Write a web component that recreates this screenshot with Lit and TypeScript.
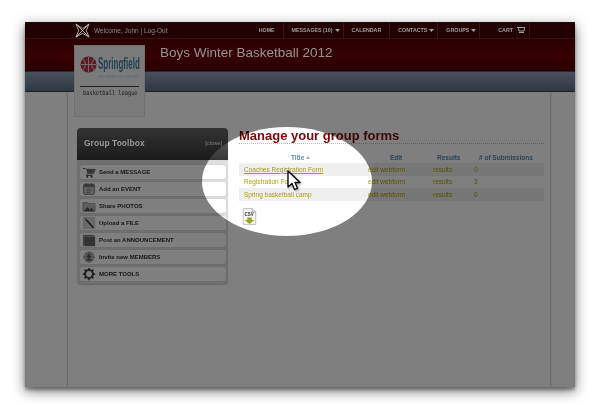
import { LitElement, html, css, svg } from "lit";
import { customElement } from "lit/decorators.js";

const caret = html`<svg class="caret" width="5" height="3" viewBox="0 0 5 3"><path d="M0 0h5L2.5 3z" fill="#a0a0a0"/></svg>`;

const icons: Record<string, unknown> = {
  cart: svg`<path d="M1 4h3l1 1h10l-2 5H6l-1 2h7" fill="none" stroke="#555" stroke-width="1.100"/><path d="M5 5h9l-1.500 4H6z" fill="#6a6a6a"/><circle cx="6" cy="13.500" r="1.100" fill="#444"/><circle cx="11" cy="13.500" r="1.100" fill="#444"/>`,
  event: svg`<rect x="2" y="2.500" width="12" height="11.500" rx="1" fill="#d4d4d4" stroke="#555"/><rect x="2.500" y="3" width="11" height="3" fill="#777"/><path d="M5 8h6M5 10h6M5 12h4" stroke="#666" stroke-width=".9"/><path d="M5 1.500v3M11 1.500v3" stroke="#555"/>`,
  photos: svg`<path d="M1 4h5l1 1h8v9H1z" fill="#bbb" stroke="#777" stroke-width=".7"/><path d="M2 14l4-5 3 3 2-2 3 4z" fill="#555"/>`,
  file: svg`<rect x="1" y="1" width="14" height="14" fill="#d0d0d0"/><path d="M4 3.500l9 10" stroke="#333" stroke-width="1.700"/><path d="M3 2.500l1.500 1.500" stroke="#999" stroke-width="2"/>`,
  post: svg`<rect x="1" y="2" width="13" height="13" fill="#888"/><rect x="3" y="4" width="12" height="11" fill="#666"/><path d="M1 4h13" stroke="#aaa" stroke-width=".8"/>`,
  invite: svg`<circle cx="8" cy="8" r="6.500" fill="#bbb"/><path d="M1.500 8h13M8 1.500v13M4 3.500c3 2 5 2 8 0M4 12.500c3-2 5-2 8 0" stroke="#777" stroke-width=".8" fill="none"/><circle cx="8" cy="7" r="2" fill="#555"/><path d="M5 12c0-3 6-3 6 0z" fill="#555"/>`,
  more: svg`<circle cx="8" cy="8" r="4.500" fill="none" stroke="#444" stroke-width="2.400"/><path d="M8 1v3M8 12v3M1 8h3M12 8h3M3 3l2 2M11 11l2 2M13 3l-2 2M5 11l-2 2" stroke="#444" stroke-width="2"/>`,
};

const tools = [
  ["cart", "Send a MESSAGE"],
  ["event", "Add an EVENT"],
  ["photos", "Share PHOTOS"],
  ["file", "Upload a FILE"],
  ["post", "Post an ANNOUNCEMENT"],
  ["invite", "Invite new MEMBERS"],
  ["more", "MORE TOOLS"],
];

const forms: [string, string][] = [
  ["Coaches Registration Form", "0"],
  ["Registration Form", "3"],
  ["Spring basketball camp", "0"],
];

@customElement("app-root")
export class AppRoot extends LitElement {
  static styles = css`
    :host { display: block; width: 600px; height: 420px; background: #fff; overflow: hidden; font-family: "Liberation Sans", Arial, sans-serif; }
    .stage { padding: 22px 25px 0; }
    .frame { position: relative; width: 550px; height: 365px; background: #fff; box-shadow: 0 3px 3px rgba(0,0,0,.3), 0 4px 12px rgba(0,0,0,.55); }
    .clip { position: absolute; inset: 0; overflow: hidden; filter: blur(.3px); }
    .head { position: relative; z-index: 3; }
    .top { height: 16px; background: #220000; border-bottom: 1px solid #3c1010; display: flex; align-items: center; padding-left: 50px; }
    .mark { width: 15px; height: 15px; margin-right: 4px; }
    .welcome { font-size: 6.5px; color: #8c8c8c; flex: 1; }
    .nav { display: flex; height: 16px; align-items: stretch; padding-right: 45px; }
    .nav span { display: flex; align-items: center; gap: 2px; font-size: 5.3px; font-weight: bold; color: #a0a0a0; padding: 0 8px; border-right: 1px solid #3f1414; white-space: nowrap; box-sizing: border-box; }
    .nav .has { padding: 0 3px 0 8px; }
    .nav .cart { padding: 0 4px 0 18px; gap: 4px; }
    .band { height: 33px; background: linear-gradient(#2c0000, #360000 55%, #2a0000); border-bottom: 1px solid #242a30; display: flex; padding: 5px 0 0 135px; box-sizing: border-box; }
    .band h1 { margin: 0; font-weight: normal; font-size: 13.5px; line-height: 17px; color: #949494; }
    .slate { height: 20px; background: linear-gradient(#46515c, #2f3842); border-bottom: 1px solid #222; box-sizing: border-box; }
    .logo { position: absolute; left: 49px; top: 23px; width: 71px; height: 72px; box-sizing: border-box; background: #7a7a7a; border: 1px solid #707070; z-index: 4; overflow: hidden; }
    .ball { position: absolute; left: 5px; top: 10px; width: 17px; height: 17px; }
    .spring { position: absolute; left: 23px; top: 9px; font-size: 16px; line-height: 18px; font-weight: bold; color: #23404f; transform: scaleX(.5); transform-origin: left top; white-space: nowrap; }
    .rec { position: absolute; left: 23px; top: 28px; font-size: 4px; line-height: 5px; color: #4e6a78; transform: scaleX(.92); transform-origin: left top; white-space: nowrap; }
    .rule { position: absolute; left: 5px; right: 5px; top: 40px; height: 1px; background: #222; }
    .league { position: absolute; left: 8px; top: 43px; font-size: 6.5px; line-height: 9px; color: #1c1c1c; font-family: "DejaVu Sans Mono", monospace; transform: scaleX(.82); transform-origin: left top; white-space: nowrap; }

    .main { position: absolute; left: 0; right: 0; top: 70px; bottom: 0; background: #fff; }
    .column { position: absolute; left: 43px; right: 25px; top: 0; bottom: 0; box-shadow: 0 0 2px rgba(0,0,0,.5); background: #fff; display: grid; grid-template-columns: 151px 305px; gap: 11px; padding: 36px 0 0 9px; align-items: start; }
    .toolbox { background: #dedede; border-radius: 4px; padding-bottom: 3px; box-shadow: 0 1px 1px rgba(0,0,0,.2); }
    .tb-head { height: 32px; border-radius: 4px 4px 0 0; background: linear-gradient(#666, #363636); display: flex; align-items: center; justify-content: space-between; padding: 0 6px 2px 7px; box-sizing: border-box; margin-bottom: 5px; }
    .tb-head b { position: relative; z-index: 3; font-size: 8.4px; color: #999; letter-spacing: .1px; }
    .tb-head small { font-size: 5.8px; color: #f0f0f0; }
    .tb-row { height: 14px; margin: 0 2px 3px 3px; background: #fff; border-radius: 2px; display: flex; align-items: center; font-size: 6px; font-weight: bold; color: #333; box-shadow: 0 0 1px rgba(0,0,0,.25); }
    .tb-row:last-child { margin-bottom: 0; }
    .tb-row svg { width: 14px; height: 14px; margin: 0 3px 0 2px; flex: none; }
    .forms h2 { margin: 0; font-size: 13px; line-height: 15px; color: #7a0808; }
    .forms .dots { border-bottom: 1px dotted #bbb; margin: 0 0 7px; }
    .row { display: grid; grid-template-columns: 129px 65px 41px 70px; align-items: center; font-size: 6.5px; color: #aea000; }
    .row.th { height: 12px; color: #5a8aa6; font-weight: bold; }
    .row.th .t { padding-left: 52px; }
    .row.th .e { padding-left: 22px; }
    .row.th .r { padding-left: 4px; }
    .row.th .n { padding-left: 5px; white-space: nowrap; }
    .row.tr { height: 12.6px; }
    .row.shade { background: #efefef; }
    .row.tr > :first-child { padding-left: 5px; white-space: nowrap; }
    .row u { color: #a89c00; }
    .sort { display: inline-block; width: 0; height: 0; border: 2.5px solid transparent; border-bottom: 3px solid #aaa; border-top: 0; margin-left: 2px; vertical-align: 1px; }
    .csv { display: block; margin: 7px 0 0 3px; }
    .spot { position: absolute; left: 177px; top: 105px; width: 170px; height: 109px; border-radius: 50%; box-shadow: 0 0 0 700px rgba(0,0,0,.5); z-index: 2; pointer-events: none; }
    .arrow { position: absolute; left: 262px; top: 148px; z-index: 5; filter: drop-shadow(1px 1px 1px rgba(0,0,0,.4)); }
  `;

  render() {
    return html`<div class="stage"><div class="frame"><div class="clip">
      <div class="main">
        <div class="column">
          <div class="toolbox">
            <div class="tb-head"><b>Group Toolbox</b><small>[close]</small></div>
            ${tools.map(([i, t]) => html`<div class="tb-row"><svg viewBox="0 0 16 16">${icons[i]}</svg>${t}</div>`)}
          </div>
          <div class="forms">
            <h2>Manage your group forms</h2>
            <div class="dots"></div>
            <div class="row th"><span class="t">Title<i class="sort"></i></span><span class="e">Edit</span><span class="r">Results</span><span class="n"># of Submissions</span></div>
            ${forms.map(([name, n], i) => html`<div class="row tr ${i !== 1 ? "shade" : ""}">
              <span>${i === 0 ? html`<u>${name}</u>` : name}</span><span>edit webform</span><span>results</span><span>${n}</span></div>`)}
            <svg class="csv" width="15" height="17" viewBox="0 0 15 19">
              <path d="M.5.5h10l4 4v14H.5z" fill="#f4f4f4" stroke="#bbb"/>
              <path d="M10.500.5v4h4" fill="#ddd" stroke="#bbb"/>
              <text x="2" y="9" font-size="5" font-weight="bold" font-family="Liberation Sans" fill="#333">CSV</text>
              <path d="M5 10.500h5v3h3l-5.500 4.500L2 13.500h3z" fill="#9aa82a"/>
            </svg>
          </div>
        </div>
      </div>
      <div class="head">
        <div class="top">
          <svg class="mark" viewBox="0 0 16 16" fill="none" stroke="#b5b5b5" stroke-width="1"><path d="M1 1l7 5 7-5-3 7 3 7-7-4-7 4 3-7z"/><path d="M1 1l14 14M15 1L1 15"/></svg>
          <span class="welcome">Welcome, John | Log-Out</span>
          <div class="nav">
            <span>HOME</span><span class="has">MESSAGES (10) ${caret}</span><span>CALENDAR</span><span class="has">CONTACTS ${caret}</span><span class="has">GROUPS ${caret}</span>
            <span class="cart">CART <svg width="8" height="7" viewBox="0 0 8 7" fill="none" stroke="#a0a0a0"><path d="M0 .5h8L7 4H2L1.500 1M2 5.500h5"/></svg></span>
          </div>
        </div>
        <div class="band"><h1>Boys Winter Basketball 2012</h1></div>
        <div class="slate"></div>
      </div>
      <div class="spot"></div>
      <div class="logo">
        <svg class="ball" viewBox="0 0 17 17"><circle cx="8.500" cy="8.500" r="8" fill="#5c1a28"/><path d="M1 8.500h15M8.500 1v15M3 3c3 3 3 8 0 11M14 3c-3 3-3 8 0 11" stroke="#7c7c7c" fill="none" stroke-width=".8"/></svg>
        <span class="spring">Springfield</span>
        <span class="rec">RECREATION CENTER</span>
        <div class="rule"></div>
        <span class="league">basketball league</span>
      </div>
      </div>
      <svg class="arrow" width="14" height="22" viewBox="0 0 14 22"><path d="M1 1v16l4-3.500 2.500 6 3-1.300-2.500-5.700h5z" fill="#fff" stroke="#000" stroke-width="1.300" stroke-linejoin="round"/></svg>
    </div></div>`;
  }
}
